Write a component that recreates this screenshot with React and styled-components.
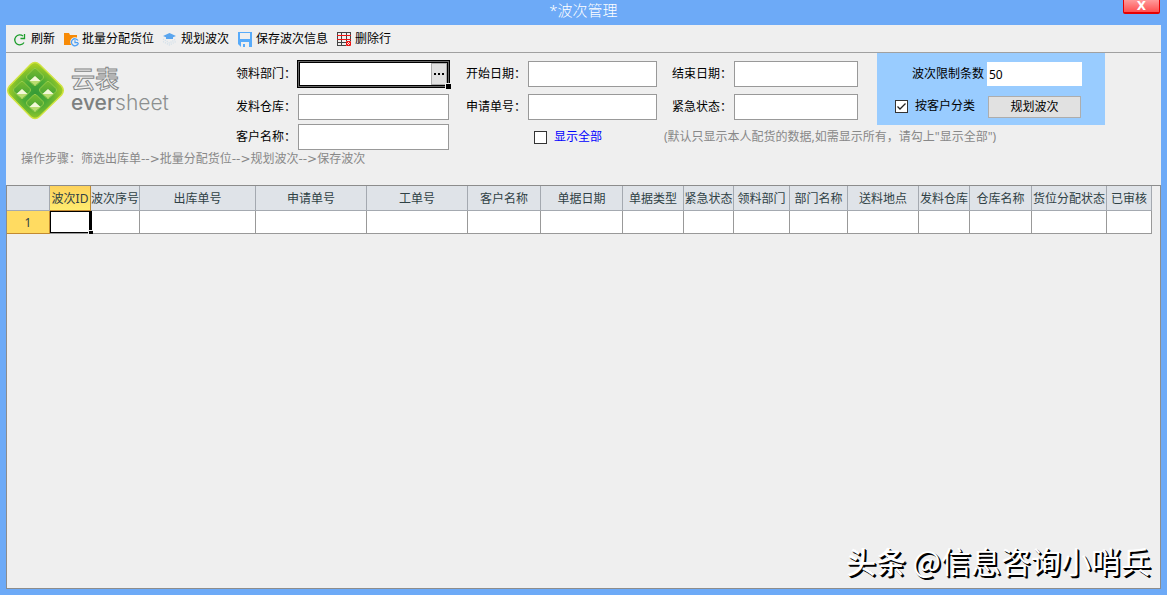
import React, { useState } from 'react';
import styled, { createGlobalStyle, css } from 'styled-components';

const GlobalStyle = createGlobalStyle`
  * {
    box-sizing: border-box;
  }
  body {
    margin: 0;
    background: #fff;
    font-family: 'Noto Sans', 'Noto Sans CJK SC', sans-serif;
    font-size: 12px;
    line-height: 16px;
    color: #000;
  }
  button,
  input {
    font: inherit;
    color: inherit;
    border-radius: 0;
  }
`;

const Window = styled.main`
  position: relative;
  display: flex;
  flex-direction: column;
  min-height: calc(100vh - 1px);
  margin: 0 1px 1px 0;
  padding: 0 6px 6px;
  background: #6daaf7;
`;

const TitleBar = styled.header`
  position: relative;
  height: 25px;
  h1 {
    margin: 0;
    color: #fff;
    font-size: 15px;
    font-weight: 300;
    line-height: 21px;
    text-align: center;
  }
`;

const CloseButton = styled.button`
  position: absolute;
  top: 0;
  right: 1px;
  width: 37px;
  height: 14px;
  padding: 0;
  border: 1px solid #e60000;
  border-top: none;
  border-bottom-width: 2px;
  border-radius: 0 0 2px 2px;
  background: linear-gradient(#ff9a9a, #ff5050);
  color: #fff;
  font-family: 'DejaVu Sans', sans-serif;
  font-weight: bold;
  line-height: 11px;
`;

const Client = styled.div`
  flex: 1;
  display: flex;
  flex-direction: column;
  background: #efefef;
`;

const Toolbar = styled.nav`
  display: flex;
  gap: 8px;
  height: 28px;
  padding-left: 6px;
  border-bottom: 1px solid #a0a0a0;
`;

const ToolButton = styled.button`
  display: flex;
  align-items: center;
  gap: 3px;
  padding: 0;
  border: none;
  background: none;
  white-space: nowrap;
  svg {
    width: 16px;
    height: 16px;
    margin-top: 3px;
  }
`;

const Filters = styled.section`
  display: grid;
  grid-template-columns: 230px 62px 151px 17px 62px 129px 15px 62px 124px 19px 228px;
  grid-template-rows: 41px 30px 26px;
  justify-content: start;
  align-items: start;
`;

const Logo = styled.div`
  grid-column: 1;
  grid-row: 1 / 4;
  display: flex;
  gap: 6px;
  padding-top: 8px;
  svg {
    width: 59px;
    height: 59px;
  }
`;

const LogoText = styled.div`
  display: flex;
  flex-direction: column;
  padding-top: 5px;
  strong {
    color: #efefef;
    font-family: 'Liberation Sans', 'Noto Sans CJK SC', sans-serif;
    font-size: 24px;
    font-weight: 500;
    line-height: 28px;
    -webkit-text-stroke: 1px #858787;
  }
  span {
    color: #8c8f8f;
    font-family: Inter, sans-serif;
    font-size: 21px;
    font-weight: 300;
    line-height: 18px;
  }
  b {
    color: #7d8080;
    font-weight: 500;
  }
`;

const Label = styled.label`
  grid-column: ${({ $col }) => $col};
  grid-row: ${({ $row }) => $row};
  align-self: end;
  height: ${({ $row }) => ($row === 1 ? 33 : $row === 2 ? 30 : 26)}px;
  line-height: 26px;
  color: #000;
  white-space: nowrap;
`;

const boxPlace = css`
  grid-column: ${({ $col }) => $col};
  grid-row: ${({ $row }) => $row};
  height: 26px;
  margin-top: ${({ $row }) => ($row === 1 ? 8 : 0)}px;
`;

const TextBox = styled.input`
  ${boxPlace}
  width: 100%;
  padding: 0 4px;
  border: 1px solid #999;
  background: #fff;
`;

const PickerBox = styled.div`
  ${boxPlace}
  position: relative;
  display: flex;
  padding: 1px;
  border: 1px solid #666;
  background: #fff;
  box-shadow: 0 0 0 1px #000, inset 0 0 0 1px #000;
  input {
    flex: 1;
    min-width: 0;
    padding: 0 4px;
    margin: 1px;
    border: none;
    outline: none;
  }
  button {
    display: flex;
    align-items: center;
    justify-content: center;
    width: 16px;
    padding: 0;
    border: 1px solid #adadad;
    background: #e1e1e1;
  }
`;

const Handle = styled.i`
  position: absolute;
  right: -3px;
  bottom: -3px;
  width: 6px;
  height: 6px;
  border: solid #efefef;
  border-width: 1px 0 0 1px;
  background: #000;
`;

const CheckLabel = styled.label`
  display: flex;
  align-items: center;
  gap: 7px;
  white-space: nowrap;
  input {
    appearance: none;
    width: 13px;
    height: 13px;
    margin: 0;
    border: 1px solid #333;
    background: #fff;
  }
`;

const ShowAll = styled(CheckLabel)`
  grid-column: 6;
  grid-row: 3;
  height: 26px;
  padding-left: 6px;
  color: #00f;
`;

const Note = styled.span`
  grid-column: 8 / 12;
  grid-row: 3;
  margin-left: -8px;
  line-height: 26px;
  color: #888;
`;

const CheckMark = styled.span`
  position: relative;
  display: flex;
  svg {
    position: absolute;
    inset: 0;
    pointer-events: none;
  }
`;

const Panel = styled.div`
  grid-column: 11;
  grid-row: 1 / 3;
  display: grid;
  grid-template-columns: 92px 95px;
  justify-content: end;
  align-content: start;
  gap: 10px 1px;
  height: 72px;
  padding: 9px 23px 0 0;
  background: #99ccff;
  > label {
    line-height: 24px;
    text-align: right;
    padding-right: 2px;
  }
  > input {
    height: 24px;
    padding: 0 2px;
    border: none;
    background: #fff;
  }
`;

const SplitLabel = styled(CheckLabel)`
  justify-content: end;
  height: 20px;
  margin-right: 9px;
`;

const PlanButton = styled.button`
  height: 22px;
  width: 93px;
  margin-left: 1px;
  padding: 0;
  border: 1px solid #adadad;
  background: #e1e1e1;
`;

const Steps = styled.p`
  margin: 0 0 18px;
  padding: 1px 0 0 15px;
  color: #888;
  font-family: 'DejaVu Sans', 'Noto Sans CJK SC', sans-serif;
`;

const Sheet = styled.div`
  flex: 1;
  border: 1px solid #8c8c8c;
  overflow: hidden;
`;

const Grid = styled.table`
  table-layout: fixed;
  width: 1145px;
  border-collapse: separate;
  border-spacing: 0;
  color: #2f4145;
`;

const HeadCell = styled.th`
  height: 25px;
  padding: 2px 0 0;
  border: 0 solid ${({ $active }) => ($active ? '#c28a30' : '#a4a9b0')};
  border-width: 0 1px 1px 0;
  background: ${({ $active }) => ($active ? 'linear-gradient(#fdd25c, #ffec70)' : '#dfe3e8')};
  font-weight: normal;
  white-space: nowrap;
  overflow: hidden;
`;

const RowHead = styled(HeadCell)`
  height: 23px;
  border-color: #c28a30;
  background: #ffdb61;
`;

const Cell = styled.td`
  position: relative;
  height: 23px;
  padding: 0;
  border-right: 1px solid #999;
  border-bottom: 1px solid #999;
  background: #fff;
`;

const Cursor = styled.span`
  position: absolute;
  z-index: 1;
  inset: 0 -2px 0 0;
  border: 1px solid #000;
  border-right-width: 3px;
  i {
    right: -4px;
    bottom: -2px;
    width: 5px;
    height: 4px;
  }
`;

const Watermark = styled.div`
  position: absolute;
  right: 16px;
  bottom: 15px;
  color: #fff;
  font-family: 'Noto Sans CJK SC', sans-serif;
  font-size: 30px;
  line-height: 40px;
  white-space: nowrap;
  text-shadow: 1px 1px 0 #000, 2px 2px 0 #000;
  b {
    font-weight: 500;
  }
`;

const RefreshIcon = () => (
  <svg viewBox="0 0 16 16" fill="none" stroke="#1d9e2c" strokeWidth="1.3">
    <path d="M11 4A5 5 0 1 0 12 10.500" />
    <path d="M12.500 2v4.500H8.500" />
  </svg>
);

const FolderIcon = () => (
  <svg viewBox="0 0 16 16">
    <path d="M1 1h5l1 2h7v10H1z" fill="#f78a06" />
    <circle cx="12" cy="10" r="4.8" fill="#efefef" />
    <path d="M15 8.500A3.500 3.500 0 1 0 15.400 11" fill="none" stroke="#4da0f5" strokeWidth="1.3" />
    <path d="M12 8.300v2.400h3.200" fill="none" stroke="#4da0f5" strokeWidth="1.2" />
  </svg>
);

const LayersIcon = () => (
  <svg viewBox="0 0 16 16">
    <path
      d="M1 7l6.500 4L14 7M1 9.500l6.500 3.500L14 9.500"
      fill="none"
      stroke="#d3e0ea"
      strokeWidth="1.3"
      strokeDasharray="1.2 1"
    />
    <path d="M7.500 1 14 4 11 5.300V7h-7V5.300L1 4z" fill="#5aa5ee" />
  </svg>
);

const SaveIcon = () => (
  <svg viewBox="0 0 16 16">
    <path d="M1 0h14v15H4L1 12z" fill="#58abfa" />
    <path d="M3 1h10v6H3zM4 10h8v5H4z" fill="#efefef" />
    <path d="M6 12h2v3H6z" fill="#58abfa" />
  </svg>
);

const DeleteRowIcon = () => (
  <svg viewBox="0 0 16 16" fill="none">
    <path d="M1 .5h14M1.500 1v13M5.500 1v13M10.500 1v8M14.500 1v8M1 10.500h9M1 13.500h9" stroke="#444" />
    <path d="M1 3.500h14M1 7.500h14" stroke="#f01414" />
    <path d="M10.500 9.500h4v4h-4zM11 10l3 3M14 10l-3 3" stroke="#f01414" />
  </svg>
);

const LogoTile = ({ x, y }) => (
  <g transform={`translate(${x} ${y})`}>
    <path
      d="M-1.500-8Q0-9.500 1.500-8L8-1.500Q9 0 8 1.500L1.500 8Q0 9.500-1.500 8L-8 1.500Q-9 0-8-1.500z"
      fill="url(#well)"
      stroke="#94cc48"
    />
    <path d="M0-.5 5.500 4 0 8.500-5.500 4z" fill="#b9dc70" />
    <path d="M0-1 5.500 4H-5.500z" fill="#f2f8d8" />
  </g>
);

const LogoMark = () => (
  <svg viewBox="0 0 59 59">
    <defs>
      <radialGradient id="leaf" cy="0.55">
        <stop offset="0" stopColor="#359a36" />
        <stop offset="0.5" stopColor="#4dac36" />
        <stop offset="1" stopColor="#a3cc25" />
      </radialGradient>
      <linearGradient id="well" x2="0" y2="1">
        <stop offset="0" stopColor="#76bb2e" />
        <stop offset="1" stopColor="#3c9f38" />
      </linearGradient>
    </defs>
    <path
      d="M24.500 3.500Q29 -.5 33.500 3.500L55.500 25Q59 29.500 55.500 34L33.500 55.500Q29 59.500 24.500 55.500L3.500 34Q0 29.500 3.500 25z"
      fill="url(#leaf)"
      stroke="#cfe33f"
      strokeWidth="1.500"
    />
    <LogoTile x="29" y="16" />
    <LogoTile x="16" y="29" />
    <LogoTile x="42" y="29" />
    <LogoTile x="29" y="42" />
  </svg>
);

const tools = [
  { text: '刷新', Icon: RefreshIcon },
  { text: '批量分配货位', Icon: FolderIcon },
  { text: '规划波次', Icon: LayersIcon },
  { text: '保存波次信息', Icon: SaveIcon },
  { text: '删除行', Icon: DeleteRowIcon }
];

const fields = [
  { id: 'warehouse', text: '发料仓库', col: 2, row: 2 },
  { id: 'customer', text: '客户名称', col: 2, row: 3 },
  { id: 'start', text: '开始日期', col: 5, row: 1 },
  { id: 'apply', text: '申请单号', col: 5, row: 2 },
  { id: 'end', text: '结束日期', col: 8, row: 1 },
  { id: 'urgent', text: '紧急状态', col: 8, row: 2 }
];

const columns = [
  ['波次ID', 41],
  ['波次序号', 49],
  ['出库单号', 116],
  ['申请单号', 111],
  ['工单号', 101],
  ['客户名称', 73],
  ['单据日期', 82],
  ['单据类型', 61],
  ['紧急状态', 50],
  ['领料部门', 56],
  ['部门名称', 58],
  ['送料地点', 71],
  ['发料仓库', 51],
  ['仓库名称', 62],
  ['货位分配状态', 75],
  ['已审核', 45]
];

export default function App() {
  const [showAll, setShowAll] = useState(false);
  const [byCustomer, setByCustomer] = useState(true);

  return (
    <>
      <GlobalStyle />
      <Window>
        <TitleBar>
          <h1>*波次管理</h1>
          <CloseButton>X</CloseButton>
        </TitleBar>
        <Client>
          <Toolbar>
            {tools.map(({ text, Icon }) => (
              <ToolButton key={text}>
                <Icon />
                {text}
              </ToolButton>
            ))}
          </Toolbar>
          <Filters>
            <Logo>
              <LogoMark />
              <LogoText>
                <strong>云表</strong>
                <span>
                  <b>ever</b>sheet
                </span>
              </LogoText>
            </Logo>
            <Label htmlFor="dept" $col={2} $row={1}>
              领料部门：
            </Label>
            <PickerBox $col={3} $row={1}>
              <input id="dept" />
              <button aria-label="选择领料部门">
                <svg width="10" height="2" fill="#000">
                  <path d="M0 0h2v2H0zM4 0h2v2H4zM8 0h2v2H8z" />
                </svg>
              </button>
              <Handle />
            </PickerBox>
            {fields.map(({ id, text, col, row }) => (
              <React.Fragment key={id}>
                <Label htmlFor={id} $col={col} $row={row}>
                  {text}：
                </Label>
                <TextBox id={id} $col={col + 1} $row={row} />
              </React.Fragment>
            ))}
            <ShowAll>
              <input type="checkbox" checked={showAll} onChange={() => setShowAll(!showAll)} />
              显示全部
            </ShowAll>
            <Note>(默认只显示本人配货的数据,如需显示所有，请勾上"显示全部")</Note>
            <Panel>
              <label htmlFor="limit">波次限制条数</label>
              <input id="limit" defaultValue="50" />
              <SplitLabel>
                <CheckMark>
                  <input
                    type="checkbox"
                    checked={byCustomer}
                    onChange={() => setByCustomer(!byCustomer)}
                  />
                  {byCustomer && (
                    <svg width="13" height="13" fill="none" stroke="#222" strokeWidth="1.3">
                      <path d="M2.500 6.500 5 9l5.500-5.500" />
                    </svg>
                  )}
                </CheckMark>
                按客户分类
              </SplitLabel>
              <PlanButton>规划波次</PlanButton>
            </Panel>
          </Filters>
          <Steps>操作步骤：筛选出库单--&gt;批量分配货位--&gt;规划波次--&gt;保存波次</Steps>
          <Sheet>
            <Grid>
              <colgroup>
                <col width="43" />
                {columns.map(([name, width]) => (
                  <col key={name} width={width} />
                ))}
              </colgroup>
              <thead>
                <tr>
                  <HeadCell />
                  {columns.map(([name], i) => (
                    <HeadCell key={name} $active={i === 0}>
                      {name}
                    </HeadCell>
                  ))}
                </tr>
              </thead>
              <tbody>
                <tr>
                  <RowHead>1</RowHead>
                  {columns.map(([name], i) => (
                    <Cell key={name}>
                      {i === 0 && (
                        <Cursor>
                          <Handle />
                        </Cursor>
                      )}
                    </Cell>
                  ))}
                </tr>
              </tbody>
            </Grid>
          </Sheet>
        </Client>
        <Watermark>
          <b>头条</b> @信息咨询小哨兵
        </Watermark>
      </Window>
    </>
  );
}
